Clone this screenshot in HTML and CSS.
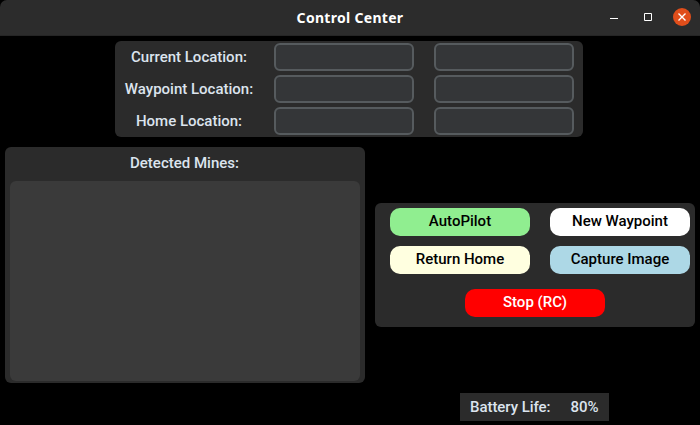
FILE: index.html
```html
<!DOCTYPE html>
<html lang="en">
<head>
<meta charset="utf-8">
<title>Control Center</title>
<link rel="stylesheet" href="styles.css">
</head>
<body>
<header class="titlebar">
  <h1 class="title">Control Center</h1>
  <div class="window-controls">
    <svg class="control" width="18" height="18" viewBox="0 0 18 18"><path d="M5 10.5h8" stroke="#fff"/></svg>
    <svg class="control" width="18" height="18" viewBox="0 0 18 18"><path d="M5.5 5.5h7v7h-7z" fill="none" stroke="#fff"/></svg>
    <svg class="control" width="18" height="18" viewBox="0 0 18 18"><circle cx="9" cy="9" r="9" fill="#e04e1b"/><path d="M5.5 5.5l7 7M12.5 5.5l-7 7" stroke="#fff" stroke-width="1.4"/></svg>
  </div>
</header>
<main class="content">
  <section class="panel locations">
    <span class="label">Current Location:</span><div class="entry"></div><div class="entry"></div>
    <span class="label">Waypoint Location:</span><div class="entry"></div><div class="entry"></div>
    <span class="label">Home Location:</span><div class="entry"></div><div class="entry"></div>
  </section>
  <div class="middle">
    <section class="panel mines">
      <span class="label mines-label">Detected Mines:</span>
      <div class="mine-list"></div>
    </section>
    <section class="panel actions">
      <button class="btn autopilot">AutoPilot</button>
      <button class="btn waypoint">New Waypoint</button>
      <button class="btn home">Return Home</button>
      <button class="btn capture">Capture Image</button>
      <button class="btn stop">Stop (RC)</button>
    </section>
  </div>
  <footer class="battery"><span class="battery-label">Battery Life:</span><span>80%</span></footer>
</main>
</body>
</html>
```
FILE: styles.css
```css
* { box-sizing: border-box; }
body {
  margin: 0;
  height: 425px;
  overflow: hidden;
  background: #000;
  color: #dce4ee;
  font: 500 15px/28px Roboto, sans-serif;
}
.titlebar {
  display: grid;
  grid-template-columns: 88px 1fr 88px;
  align-items: center;
  height: 36px;
  padding: 0 9px;
  background: #2c2c2c;
  border-bottom: 1px solid #252525;
  border-radius: 7px 7px 0 0;
}
.title {
  grid-column: 2;
  margin: 0;
  text-align: center;
  color: #fff;
  font: bold 14px/20px "Noto Sans", sans-serif;
  letter-spacing: 0.3px;
}
.window-controls { display: flex; gap: 16px; justify-content: flex-end; margin-top: -1px; }
.control { display: block; }
.content { padding: 5px; }
.panel { background: #2b2b2b; border-radius: 6px; }
.locations {
  display: grid;
  grid-template-columns: 149px 160px 160px;
  grid-auto-rows: 28px;
  row-gap: 4px;
  justify-items: center;
  width: 468px;
  height: 96px;
  margin-left: 110px;
  padding-top: 2px;
}
.label { padding-right: 1px; text-align: center; white-space: nowrap; }
.entry {
  width: 140px;
  height: 28px;
  background: #343638;
  border: 2px solid #565b5e;
  border-radius: 6px;
}
.middle { display: flex; align-items: center; gap: 10px; margin-top: 10px; }
.mines {
  display: flex;
  flex-direction: column;
  width: 360px;
  height: 236px;
  padding: 2px 5px;
}
.mine-list { height: 200px; margin-top: 4px; background: #3a3a3a; border-radius: 6px; }
.actions {
  display: grid;
  grid-template-columns: 140px 140px;
  align-content: start;
  column-gap: 20px;
  row-gap: 10px;
  width: 320px;
  height: 124px;
  padding: 5px 5px 0 15px;
}
.btn {
  width: 140px;
  height: 28px;
  padding: 0 0 2px;
  border: 0;
  border-radius: 10px;
  color: #000;
  font: inherit;
  line-height: 26px;
}
.autopilot { background: #90ee90; }
.waypoint { background: #fff; }
.home { background: #ffffe0; }
.capture { background: #add8e6; }
.stop { grid-column: 1 / 3; margin: 5px 0 0 75px; background: #f00; color: #fff; }
.battery {
  display: flex;
  justify-content: space-between;
  width: 149px;
  height: 28px;
  margin: 10px 0 0 455px;
  padding: 0 10.5px 0 10px;
  background: #2b2b2b;
}
.battery-label { letter-spacing: -0.05px; }
```
